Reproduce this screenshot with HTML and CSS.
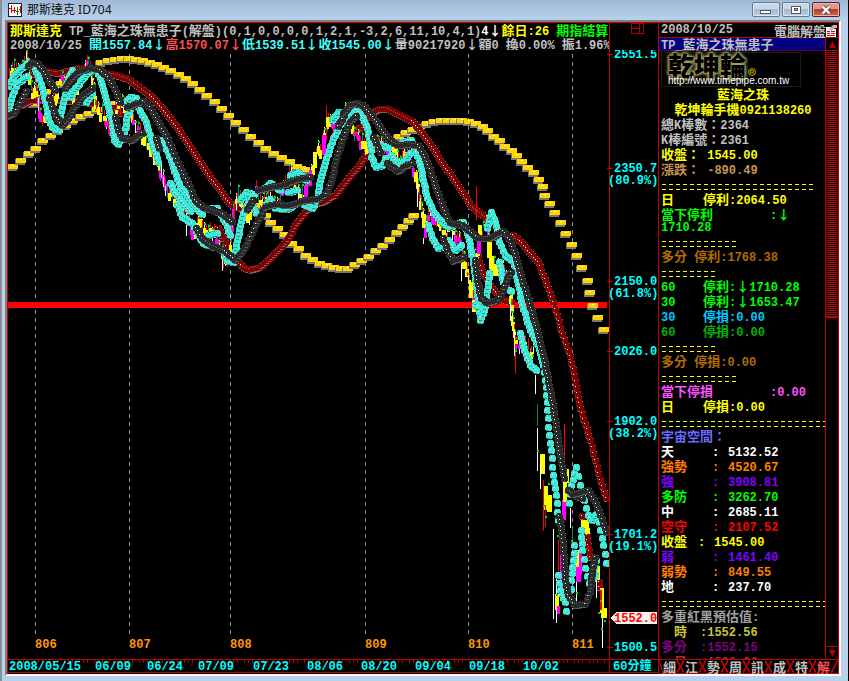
FILE: index.html
```html
<!DOCTYPE html>
<html lang="zh-Hant">
<head>
<meta charset="utf-8">
<title>那斯達克 ID704</title>
<link rel="stylesheet" href="styles.css">
</head>
<body>
<header class="titlebar">
  <svg class="app-icon" width="14" height="14" viewBox="0 0 14 14" shape-rendering="crispEdges">
    <rect width="14" height="14" fill="#222"/><rect x="1" y="1" width="12" height="12" fill="#fff"/>
    <path d="M3.500 2v8M1 5.500h2M6.500 4v6M4 7.500h4M12.500 3v7M11 6.500h1" stroke="#e00000"/>
    <path d="M9.500 4v8M8 8.500h3" stroke="#009000"/>
  </svg>
  <h1>那斯達克 ID704</h1>
  <div class="window-buttons">
    <button aria-label="最小化"><svg width="12" height="10" viewBox="0 0 12 10"><rect x=".5" y="5.500" width="10" height="3" fill="#fff" stroke="#555b66"/></svg></button>
    <button aria-label="最大化"><svg width="12" height="10" viewBox="0 0 12 10"><rect x="1.500" y="1.500" width="9" height="7" fill="#fff" stroke="#555b66"/><rect x="4.500" y="3.500" width="3" height="2" fill="#8aa5c5" stroke="#555b66"/></svg></button>
    <button class="close" aria-label="關閉"><svg width="12" height="10" viewBox="0 0 12 10"><path d="M2.500 1.500l7 7M9.500 1.500l-7 7" stroke="#5d4a50" stroke-width="4"/><path d="M2.500 1.500l7 7M9.500 1.500l-7 7" stroke="#fff" stroke-width="2.400"/></svg></button>
  </div>
</header>
<main class="frame">
  <section class="chart">
    <div class="chart-head">
      <div class="quotes">
        <p><span class="zh yellow">那斯達克</span><span class="apart">TP_<span class="zh">藍海之珠無患子</span>(<span class="zh">解盤</span>)(0,1,0,0,0,0,1,2,1,-3,2,6,11,10,4,1)</span><span class="white">4<span class="zh">↓</span></span><span class="yellow"><span class="zh">餘日</span>:26</span><span class="zh lime apart">期指結算日</span></p>
        <p><span>2008/10/25</span><span class="cyan apart"><span class="zh">開</span>1557.84<span class="zh">↓</span></span><span class="coral"><span class="zh">高</span>1570.07<span class="zh">↓</span></span><span class="cyan"><span class="zh">低</span>1539.51<span class="zh">↓</span></span><span class="cyan"><span class="zh">收</span>1545.00<span class="zh">↓</span></span><span><span class="zh">量</span>90217920<span class="zh">↓額</span>0</span><span class="apart"><span class="zh">換</span>0.00%</span><span class="apart"><span class="zh">振</span>1.96%</span><span class="zh cyan apart">漲</span></p>
      </div>
      <div class="axis-head"><svg width="14" height="12" viewBox="0 0 14 12" shape-rendering="crispEdges"><path d="M.5 0v11M8.500 0v11M.5 10.500h12M.5 5.500h8M12.500 0v11M.5 .5h12" stroke="#b00000" fill="none"/></svg></div>
    </div>
    <svg id="plot" viewBox="8 50 650 623" preserveAspectRatio="xMinYMin meet" role="img" aria-label="60分鐘走勢圖"></svg>
  </section>
  <aside class="panel">
    <div class="panel-head"><span>2008/10/25</span><span class="zh">電腦解盤</span>
      <svg width="12" height="13" viewBox="0 0 12 13" shape-rendering="crispEdges"><rect y="3" width="10" height="10" fill="#fff"/><path d="M1 7.500h3M5 7.500h4M1 9.500h3M5 9.500h4M1 11.500h8" stroke="#e00000"/><path d="M3 5l3-4h5v3l-4 1-2 2z" fill="#bbb"/><path d="M4 3l3-2M8 4l2 1" stroke="#333"/></svg>
    </div>
    <div class="panel-main">
      <div class="report">
        <div class="report-title">TP_<span class="zh">藍海之珠無患子</span></div>
        <div class="logo"><strong>乾坤輪</strong><i>R</i><a href="#">http://www.timepipe.com.tw</a></div>
        <p class="center yellow"><span class="zh">藍海之珠</span></p>
        <p class="center yellow"><span class="zh">乾坤輪手機</span>0921138260</p>
        <p class="gray"><span class="zh">總</span>K<span class="zh">棒數：</span>2364</p>
        <p class="gray">K<span class="zh">棒編號：</span>2361</p>
        <p class="yellow"><span class="zh">收盤：</span> 1545.00</p>
        <p class="tan"><span class="zh">漲跌：</span> -890.49</p>
        <hr class="w22">
        <p class="stop yellow"><span class="zh">日</span><span><span class="zh">停利</span>:2064.50</span></p>
        <p class="wrapped lime"><span class="far zh">當下停利</span>:<span class="zh">↓</span><br>1710.28</p>
        <hr class="w11">
        <p class="brown"><span class="zh">多分</span> <span class="zh">停利</span>:1768.38</p>
        <hr class="w8">
        <p class="stop lime"><span>60</span><span><span class="zh">停利</span>:<span class="zh">↓</span>1710.28</span></p>
        <p class="stop lime"><span>30</span><span><span class="zh">停利</span>:<span class="zh">↓</span>1653.47</span></p>
        <p class="stop sky"><span>30</span><span><span class="zh">停損</span>:0.00</span></p>
        <p class="stop green"><span>60</span><span><span class="zh">停損</span>:0.00</span></p>
        <hr class="w8">
        <p class="brown"><span class="zh">多分</span> <span class="zh">停損</span>:0.00</p>
        <hr class="w11">
        <p class="pink"><span class="far zh">當下停損</span>:0.00</p>
        <p class="stop yellow"><span class="zh">日</span><span><span class="zh">停損</span>:0.00</span></p>
        <hr>
        <p class="blue"><span class="zh">宇宙空間：</span></p>
        <p class="level white"><span class="zh">天</span><span>:</span><span>5132.52</span></p>
        <p class="level orange"><span class="zh">強勢</span><span>:</span><span>4520.67</span></p>
        <p class="level violet"><span class="zh">強</span><span>:</span><span>3908.81</span></p>
        <p class="level lime"><span class="zh">多防</span><span>:</span><span>3262.70</span></p>
        <p class="level white"><span class="zh">中</span><span>:</span><span>2685.11</span></p>
        <p class="level red"><span class="zh">空守</span><span>:</span><span>2107.52</span></p>
        <p class="level near yellow"><span class="zh">收盤</span><span>:</span><span>1545.00</span></p>
        <p class="level violet"><span class="zh">弱</span><span>:</span><span>1461.40</span></p>
        <p class="level orange"><span class="zh">弱勢</span><span>:</span><span>849.55</span></p>
        <p class="level white"><span class="zh">地</span><span>:</span><span>237.70</span></p>
        <hr>
        <p class="silver"><span class="zh">多重紅黑預估值</span>:</p>
        <p class="guess inset olive"><span class="zh">時</span><span>:1552.56</span></p>
        <p class="guess purple"><span class="zh">多分</span><span>:1552.15</span></p>
        <p class="guess inset maroon"><span class="zh">日</span><span>:1520.26</span></p>
      </div>
      <div class="scroll">
        <button aria-label="向上捲動"><svg width="7" height="7" viewBox="0 0 7 7"><path d="M3.500 0L7 7H0z" fill="#b00000"/></svg></button>
        <div class="thumb"></div>
        <button class="down" aria-label="向下捲動"><svg width="7" height="7" viewBox="0 0 7 7"><path d="M3.500 7L7 0H0z" fill="#b00000"/></svg></button>
      </div>
    </div>
    <nav class="tabs">
      <button>細</button><button>江</button><button>勢</button><button>周</button><button>訊</button><button>成</button><button>特</button><button class="on">解</button>
    </nav>
  </aside>
</main>
<script src="chart.js"></script>
</body>
</html>
```

FILE: styles.css
```css
* { box-sizing: border-box; }
body {
  margin: 0;
  height: 100vh;
  display: flex;
  flex-direction: column;
  background: #b9d1ea;
  border-left: 2px solid #8a9099;
  border-right: 1px solid #000;
  font: bold 12px/15px "Liberation Mono", "Noto Sans CJK TC", monospace;
  color: #c0c0c0;
  overflow: hidden;
}
h1, p { margin: 0; font-weight: inherit; }
button { margin: 0; padding: 0; font: inherit; color: inherit; }
.zh { font-size: 13px; font-family: "Noto Sans CJK TC", sans-serif; line-height: 13px; }

.titlebar {
  height: 20px;
  flex: none;
  display: flex;
  align-items: center;
  gap: 5px;
  padding: 0 8px 0 6px;
  background: linear-gradient(#9fb9d7, #b9d1ea);
}
.titlebar h1 {
  flex: 1;
  font: 12px/18px "Noto Sans", "Noto Sans CJK TC", sans-serif;
  color: #111;
}
.window-buttons { display: flex; gap: 2px; align-self: flex-start; padding-top: 2px; }
.window-buttons button {
  width: 28px;
  height: 15px;
  display: flex;
  align-items: center;
  justify-content: center;
  border: 1px solid #66788e;
  border-radius: 2px;
  background: linear-gradient(#c8d8ea 45%, #a3bad3 50%, #b9cfe6);
  box-shadow: inset 0 0 0 1px #dce8f4;
}
.window-buttons .close {
  border-color: #5b2026;
  background: linear-gradient(#dd9a8c 45%, #b93a25 50%, #cf6a50);
  box-shadow: inset 0 0 0 1px #e8b5aa;
}

.frame {
  flex: 1;
  min-height: 0;
  display: flex;
  margin: 0 7px 5px 3px;
  border: 2px solid;
  border-color: #808080 #fff #fff #808080;
  background: #000;
}
.chart {
  flex: 1;
  min-width: 0;
  display: flex;
  flex-direction: column;
  border: solid #c00000;
  border-width: 1px 0 0 1px;
  overflow: hidden;
}
.chart-head { display: flex; height: 27px; flex: none; }
.quotes { flex: 1; min-width: 0; overflow: hidden; padding-left: 2px; }
.quotes p {
  display: flex;
  align-items: baseline;
  height: 14px;
  line-height: 13px;
  white-space: nowrap;
}
.quotes p > * { flex: none; }
.quotes .apart { margin-left: 7px; }
.axis-head { width: 49px; flex: none; border-left: 1px solid #c00000; padding-left: 21px; line-height: 10px; }
#plot { display: block; flex: 1; min-height: 0; width: 100%; }
#plot text { font: bold 12px "Liberation Mono", "Noto Sans CJK TC", monospace; }

.panel {
  width: 181px;
  flex: none;
  display: flex;
  flex-direction: column;
  border: 1px solid #c00000;
}
.panel-head {
  height: 15px;
  flex: none;
  display: flex;
  align-items: center;
  padding-left: 2px;
  border-bottom: 1px solid #c00000;
}
.panel-head .zh { margin-left: auto; }
.panel-main { flex: 1; min-height: 0; display: flex; }
.report { flex: 1; min-width: 0; overflow: hidden; }
.report-title {
  height: 13px;
  line-height: 12px;
  padding-left: 2px;
  background: #000080;
  border-bottom: 1px dotted #c00000;
}
.report-title .zh { line-height: 12px; }
.report p { height: 15px; padding-left: 2px; white-space: pre; }
.report .center { text-align: center; }
.logo {
  display: grid;
  grid-template-columns: auto 1fr;
  grid-template-rows: 23px 10px;
  width: 140px;
  margin: 1px 0 0 2px;
  padding-left: 6px;
  border: 1px solid #1c1c12;
}
.logo strong {
  font: 900 26px/24px "Noto Sans CJK TC", sans-serif;
  color: #000;
  text-shadow: 0 0 2px #a5a560, 0 0 2px #a5a560, 0 0 3px #a5a560, 0 0 3px #a5a560, 0 0 4px #8d8d50, 0 0 5px #8d8d50;
}
.logo i {
  align-self: end;
  width: 8px;
  height: 8px;
  margin-left: 2px;
  border: 1px solid #c0b000;
  border-radius: 50%;
  font: bold 6px/6px "Liberation Sans", sans-serif;
  text-align: center;
  color: #c0b000;
}
.logo a {
  grid-column: 1 / 3;
  font: 10px/10px "Liberation Sans", sans-serif;
  color: #fff;
  text-decoration: none;
  z-index: 1;
}
.report hr {
  height: 15px;
  margin: 0 0 0 3px;
  border: 0;
  background:
    repeating-linear-gradient(90deg, #ff0 0 4px, transparent 4px 7px) 0 7px / 100% 1px no-repeat,
    repeating-linear-gradient(90deg, #ff0 0 4px, transparent 4px 7px) 0 12px / 100% 1px no-repeat;
}
.report .w22 { width: 152px; }
.report .w11 { width: 75px; }
.report .w8 { width: 54px; }
.report .wrapped { height: 27px; line-height: 12px; padding-top: 1px; }
.wrapped .zh { line-height: 12px; }
.far { display: inline-block; width: 109px; }
.stop, .level, .guess { display: grid; align-items: baseline; }
.stop { grid-template-columns: 42px 1fr; }
.level { grid-template-columns: 51px 16px 1fr; }
.level.near { grid-template-columns: 37px 16px 1fr; }
.guess { grid-template-columns: 39px 1fr; }
.report .guess.inset { padding-left: 15px; grid-template-columns: 26px 1fr; }

.scroll { width: 13px; flex: none; display: flex; flex-direction: column; border-left: 1px solid #c00000; }
.scroll button {
  height: 13px;
  display: flex;
  align-items: center;
  justify-content: center;
  border: 0;
  border-bottom: 1px solid #c00000;
  background: #000;
}
.scroll .down { margin-top: auto; border-top: 1px solid #c00000; border-bottom: 0; }
.thumb { height: 43%; border-bottom: 2px solid #c00000; background: repeating-linear-gradient(#000 0 1px, #b00000 1px 2px); }
.tabs {
  display: flex;
  height: 14px;
  flex: none;
  padding-left: 3px;
  border-top: 1px solid #c00000;
  background: linear-gradient(to top right, transparent 42%, #c00000 44% 56%, transparent 58%) left / 4px 100% no-repeat;
}
.tabs button {
  width: 22px;
  height: 13px;
  flex: none;
  border: 0;
  background:
    linear-gradient(to top right, transparent 42%, #c00000 44% 56%, transparent 58%) right / 7px 100% no-repeat,
    linear-gradient(to bottom right, transparent 42%, #c00000 44% 56%, transparent 58%) right / 7px 100% no-repeat;
  font: bold 13px/13px "Noto Sans CJK TC", sans-serif;
  padding-right: 7px;
}
.tabs .on {
  color: #ff5050;
  background: linear-gradient(to bottom right, transparent 42%, #c00000 44% 56%, transparent 58%) right / 7px 100% no-repeat;
}

.yellow { color: #ff0; }
.white { color: #fff; }
.lime { color: #0f0; }
.cyan { color: #40ffff; }
.coral { color: #ff5050; }
.gray { color: #c0c0c0; }
.tan { color: #c89650; }
.brown { color: #b06c00; }
.sky { color: #00c8ff; }
.green { color: #00b400; }
.pink { color: #ff50ff; }
.blue { color: #6a6aff; }
.orange { color: #ff8000; }
.violet { color: #8000ff; }
.red { color: #f00; }
.silver { color: #a0a0a0; }
.olive { color: #c8c832; }
.purple { color: #800080; }
.maroon { color: #a03030; }
```

FILE: chart.js
```js
const out = [];
const rect = (x, y, w, h, c) => out.push(`<rect x="${x}" y="${y}" width="${w}" height="${h}" fill="${c}"/>`);
const text = (x, y, s, c) => out.push(`<text x="${x}" y="${y}" fill="${c}">${s}</text>`);

// Points along a polyline: one per bar in x, plus a cap on the vertical gap.
function sample(str, step, gap) {
  const p = str.split(' ').map(s => s.split(',').map(Number));
  const res = [];
  for (let i = 0; i < p.length - 1; i++) {
    const [x1, y1] = p[i], [x2, y2] = p[i + 1];
    const n = Math.max(1, Math.round(Math.max(Math.abs(x2 - x1) / step, Math.abs(y2 - y1) / gap)));
    const steep = Math.abs(y2 - y1) > 0.8 * Math.abs(x2 - x1);
    for (let k = 0; k < n; k++) res.push([x1 + (x2 - x1) * k / n, y1 + (y2 - y1) * k / n, steep]);
  }
  res.push([...p[p.length - 1], true]);
  return res.map(([x, y, s]) => [Math.round(x), Math.round(y), s]);
}
function beads(str, fill, edge, gap) {
  const mid = fill === '#282828' ? '#777' : edge;
  for (const [x, y, steep] of sample(str, 2, gap)) {
    rect(x - 3, y - 2, 7, 5, edge);
    rect(x - 2, y - 3, 5, 7, fill);
    rect(x - 3, y - 1, 7, 4, fill);
    rect(x - 2, y + 3, 3, 1, edge);
    rect(x - 1, y - 1, 1, 1, steep ? '#fff' : mid);
  }
}
function bricks(str) {
  for (const s of str.split(' ')) {
    const [x, y] = s.split(',').map(Number);
    rect(x - 5, y - 2, 10, 6, '#777');
    rect(x - 4, y - 3, 10, 5, '#ffd500');
    rect(x, y - 2, 2, 1, '#fff');
  }
}

const months = [[35, 806], [129, 807], [230, 808], [365, 809], [468, 810], [572, 811]];
for (const [x] of months) {
  out.push(`<path d="M${x}.5 54V638" stroke="#909090" stroke-dasharray="4 4"/>`);
}
rect(8, 302, 599, 6, '#f00');

// Long stop line
bricks('12,167 20,161 28,154 35,149 42,141 50,136 57,131 65,126 72,121 80,117 88,114 96,110');
bricks('33,104 40,98 45,92 60,84 66,79 113,104 120,103 245,197 255,206 300,169');
bricks('100,63 107,61 114,60 121,59 128,59 135,60 142,61 149,63 156,65 163,68 170,71 178,75 185,79 192,84 199,90 206,96 214,102 221,109 228,116 235,123 243,130 250,137 258,143 265,149 273,154 281,158 289,162 296,167 304,170');
bricks('265,216 270,223 277,229 284,235 291,244 298,249 305,256 312,260 319,264 326,266 333,268 340,269 347,269 354,265 361,261 368,257 375,251 382,246 389,240 396,233 402,227 408,221 413,216');
bricks('398,137 405,133 412,130 419,127 426,124 433,122 440,121 447,121 454,121 461,121 468,122 475,124 482,127 487,131 493,137 499,141 504,147 511,151 516,156 521,162 527,168 533,173 538,180 542,187 544,196 549,204 554,213 560,223 565,234 571,245 576,256 581,268 587,281 589,293 592,306 597,318 603,330');

[
  '28,75 45,71 58,73 70,70 80,68 95,70 110,74 120,76 130,80 140,88 150,95 160,106 170,118 180,132 190,147 200,162 210,177 220,190 226,199 232,205 240,208 253,211',
  '22,105 32,100 50,99 70,101 95,103', '113,108 121,113 130,115',
  '223,238 228,250 236,260 243,267 251,270 260,267 268,260 280,248 288,238 297,222 305,212 315,204 325,201 335,195 345,182 355,170 366,155',
  '355,132 361,127 366,119 372,112 380,109 388,109 400,115 412,121 422,133 432,147 442,163 452,177 462,192 471,206 480,213 487,218',
  '513,235 522,243 530,253 538,262 543,275 548,288 553,302 557,315 562,334 568,350 573,369 577,393 580,408 585,424 590,440 595,460 600,480 606,498',
  '476,250 479,262 484,275 492,288 503,299 511,302', '582,516 586,530 588,545 590,557', '599,582 599,587', '223,238 218,228'
].forEach(s => beads(s, '#800000', '#696969', 6));

// Bars: bodies and wicks round the price path, with a fixed seed
let seed = 7;
const rnd = () => (seed = (seed * 16807) % 2147483647) / 2147483647;
const price = '9,80 14,66 20,70 26,56 32,92 36,90 40,115 44,120 50,110 56,92 62,82 68,88 75,95 80,83 85,64 90,66 96,108 102,115 108,130 114,122 120,105 127,106 133,125 140,132 146,141 150,150 156,155 161,175 167,190 176,200 182,208 189,220 194,236 199,218 204,230 210,228 216,238 223,262 229,255 233,215 238,195 243,210 249,215 256,190 262,204 270,196 277,208 285,184 291,174 298,190 304,195 311,170 316,155 322,145 328,122 334,125 340,122 347,110 352,128 358,140 364,145 370,150 377,142 385,148 393,152 400,160 407,148 413,170 418,190 424,225 430,218 436,222 443,235 450,230 457,235 463,255 468,280 473,300 477,255 480,240 486,220 490,260 496,270 502,265 506,275 511,300 515,345 521,345 528,350 533,355';
sample(price, 2, 5).forEach(([x, y], i) => {
  const j = y + Math.round(rnd() * 8 - 4);
  rect(x, j - 8, 1, 8 + Math.round(rnd() * 9), ['#f00', '#fff', '#f00', '#008080'][i % 4]);
  const h = 3 + Math.round(rnd() * 8);
  if (i % 3) rect(x - 1, j - 2, 3, h, Math.floor(i / 5) % 3 === 1 ? '#f0f' : '#ff0');
  if (i % 2) rect(x, j - 7, 2, 2, '#00e000');
});
const W = '#fff', Y = '#ff0', M = '#f0f', R = '#f00', G = '#00e000', T = '#008080';
[
  [161,165,1,12,W],[163,177,1,10,W],[165,186,1,10,W],[186,223,1,13,W],[222,256,1,15,W],
  [326,106,1,30,R],[326,117,5,10,Y],[322,135,4,20,M],[313,152,4,16,Y],[309,170,3,16,M],[304,185,4,16,M],
  [361,141,7,8,Y],[414,172,4,10,Y],[417,182,1,25,W],[422,214,4,14,Y],[424,228,3,10,M],[423,238,1,6,W],
  [476,186,1,34,R],[478,225,4,15,Y],[477,238,4,16,M],[487,242,5,16,Y],[490,256,4,20,Y],[493,264,5,12,Y],
  [461,262,6,7,Y],[461,265,1,16,W],[469,282,4,16,Y],[475,290,3,16,M],[472,300,5,12,Y],[510,305,1,16,W],
  [515,335,1,39,R],[514,330,1,26,W],[514,340,4,4,Y],[535,375,1,19,W],[537,404,1,22,T],
  [537,428,1,43,W],[540,454,5,20,Y],[540,463,1,26,W],[543,480,1,51,R],[544,486,4,24,Y],[547,495,5,17,Y],[545,505,1,22,R],
  [553,529,1,90,W],[556,575,1,48,W],[558,540,1,60,R],[560,520,3,70,M],[562,500,4,20,M],[564,424,1,50,R],[563,480,4,22,Y],[566,469,3,14,Y],
  [555,594,4,16,Y],[557,606,3,8,M],[570,508,1,20,W],[572,528,1,30,T],[575,550,4,24,Y],[576,567,5,15,M],[576,582,1,22,W],[579,545,3,30,M],
  [581,520,8,10,Y],[585,528,5,6,Y],[593,555,4,15,Y],[596,566,4,14,Y],[596,580,1,18,W],[600,588,4,25,Y],[602,612,1,36,W],[601,608,6,10,Y],[600,590,2,20,R]
].forEach(a => rect(...a));
for (const [x, y] of [[515,350],[532,355],[537,450],[543,505],[545,516],[548,483],[557,535],[556,594],[563,470],[571,540],[576,592],[597,565],[600,600],[598,612],[601,628],[604,620]]) rect(x, y, 2, 2, G);

[
  '8,110 12,95 18,82 27,76', '8,86 14,75 21,68 28,62', '33,66 38,75 42,88 46,105 48,118 52,127 58,130', '60,115 64,98 68,78 72,70',
  '70,97 75,88 82,79 90,69', '96,70 100,78 104,92 108,107 112,122 114,140 118,144 122,135', '124,132 127,115 130,108',
  '124,103 130,97 136,98', '86,102 92,93', '138,107 146,122 152,143 158,162', '160,140 168,152 173,167 180,187 187,195 195,207 202,214',
  '170,183 175,193 182,201 190,211', '177,205 182,217 192,223 198,235 203,243 213,247', '208,208 217,208 225,222 230,235', '208,235 217,233',
  '222,250 227,260 233,262 237,240 240,225 243,213 248,202 253,196', '240,200 246,192 254,194', '251,202 256,213',
  '262,190 270,183 280,190', '265,205 270,199 275,208 287,209 297,203', '290,175 298,172 306,180', '288,192 297,190', '303,204 312,208 317,198 320,180 325,162 333,138 340,124 350,116 356,108',
  '332,120 338,112 343,112', '356,110 363,118 367,128 371,150', '371,157 376,167 382,165 385,158', '377,143 388,148',
  '391,155 398,165 405,160 410,153', '402,142 411,140 416,152 420,165 423,180 427,198 434,213 442,222 450,227 455,223 463,222 468,236 472,255 475,275 477,295 480,320 484,310 487,290 489,273',
  '428,225 432,238 438,248 445,245', '448,240 455,250 461,245', '487,228 491,212 495,222 499,242 505,255 513,261 517,280 522,305 530,330 538,345 543,365',
  '499,262 503,282', '475,305 478,306', '520,333 524,350 530,365 536,370', '509,290 511,291'
].forEach(s => beads(s, '#40e8d8', '#249488', 4));
[
  '543,365 546,387 547,410 549,435 551,450 553,475 556,495 558,520',
  '558,575 560,590 565,602 566,611', '569,503 571,485 576,467 580,485 584,500 588,515 592,520 597,513 600,530 603,545 606,563',
  '574,545 573,560 571,580 570,598', '581,530 582,550 585,568 589,583 595,575', '596,560 591,580'
].forEach(s => beads(s, '#40e8d8', '#249488', 8));

[
  '8,116 14,113 20,103 26,91', '28,66 32,62 38,64 44,72 50,82 55,90', '49,98 52,107 57,118 62,125 68,118 75,106 82,96 92,88',
  '65,88 70,80 78,72 90,67 100,70 108,77 114,88 120,102', '115,117 118,130 122,138 132,140 142,133',
  '127,107 135,104 143,101 150,107 158,122 166,135 172,150 180,167 188,183 195,200 203,207 213,210 223,214 232,222', '156,138 159,148',
  '196,228 202,238 212,246 225,251 235,260 243,250 250,237 258,220 265,207 275,204 290,205 305,200 318,199 326,194 332,178 336,160 342,140 350,122 356,116',
  '247,209 253,200', '258,190 270,187 283,185 298,179 310,177', '338,126 344,115',
  '343,113 351,104 358,103 365,107 373,117 382,130 390,140 398,145 410,144 418,145 424,155 428,165 434,182 440,200 446,215 450,222 462,225 470,231 478,238 490,238 503,231 510,240 516,258 522,280 530,304 537,330 543,355 550,390 555,420 560,455 564,478',
  '373,137 376,143 380,152', '387,163 392,167 398,171 405,166 412,163', '443,238 447,250 453,261 463,257',
  '475,260 477,280 481,298 488,303 497,300 503,290 507,278 511,272',
  '559,516 562,535 564,560 565,580 568,595 575,605 585,604 590,592 592,570 595,557', '568,490 575,495 582,498', '575,494 588,490 594,500 600,515 606,532'
].forEach(s => beads(s, '#282828', '#5a5a5a', 4));

for (const [x, m] of months) text(x, 648, m, '#ff9900');

// Price axis
rect(609, 50, 1, 623, '#c00000');
for (const [y, v, pct] of [[53, '2551.5'], [167, '2350.7', '(80.9%)'], [280, '2150.0', '(61.8%)'], [350, '2026.0'], [420, '1902.0', '(38.2%)'], [533, '1701.2', '(19.1%)'], [646, '1500.5']]) {
  rect(607, y + 1, 6, 1, '#c00000');
  text(614, y + 5, v, '#0ff');
  if (pct) text(608, y + 17, pct, '#0ff');
}
out.push('<path d="M610 618l6-6h41v12h-41z" fill="#f4f4ec"/>');
text(614, 622, '1552.0', '#f00');

// Time axis
rect(8, 659, 650, 1, '#c00000');
rect(8, 672, 650, 1, '#c00000');
for (let x = 12; x < 606; x += 5) rect(x + (x * 7) % 3, 660, 1, 3, '#c00000');
for (const [x, d] of [[9, '2008/05/15'], [95, '06/09'], [147, '06/24'], [198, '07/09'], [253, '07/23'], [307, '08/06'], [361, '08/20'], [415, '09/04'], [469, '09/18'], [523, '10/02'], [613, '60分鐘']]) text(x, 670, d, '#0ff');

document.getElementById('plot').innerHTML = `<g shape-rendering="crispEdges">${out.join('')}</g>`;
```
